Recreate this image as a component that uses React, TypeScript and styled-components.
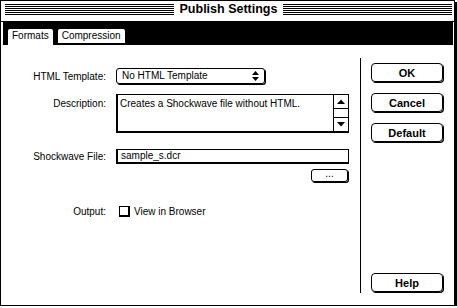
import React from "react";
import styled, { createGlobalStyle } from "styled-components";

const GlobalStyle = createGlobalStyle`
  html, body {
    margin: 0;
    padding: 0;
    background: #fff;
  }
  body {
    font-family: "Liberation Sans", Arial, sans-serif;
    font-size: 10px;
    color: #000;
    -webkit-font-smoothing: none;
  }
`;

const Window = styled.div`
  box-sizing: border-box;
  width: 455px;
  height: 306px;
  border: 1px solid #000;
  box-shadow: 2px 2px 0 #000;
  background: #fff;
  display: flex;
  flex-direction: column;
`;

const TitleBar = styled.div`
  box-sizing: border-box;
  height: 21px;
  border-bottom: 1px solid #000;
  display: flex;
  align-items: flex-start;
  padding: 3px 2px 0 4px;
`;

const Stripes = styled.div`
  flex: 1;
  height: 11px;
  background: repeating-linear-gradient(
    to bottom,
    #000 0px,
    #000 1px,
    #fff 1px,
    #fff 2px
  );
`;

const Title = styled.div`
  font-weight: bold;
  font-size: 12.5px;
  line-height: 12px;
  padding: 0 6px;
  margin-top: -1px;
`;

const TabBar = styled.div`
  height: 23px;
  margin: 0 1px 0 2px;
  background: #000;
  display: flex;
  align-items: flex-end;
  gap: 5px;
  padding-left: 5px;
`;

const Tab = styled.div<{ $active?: boolean }>`
  box-sizing: border-box;
  height: ${({ $active }) => ($active ? 16 : 14)}px;
  margin-bottom: ${({ $active }) => ($active ? 0 : 2)}px;
  padding: 0 4px;
  background: #fff;
  border-radius: 2px 2px 0 0;
  line-height: 14px;
  padding-top: 0;
`;

const Body = styled.div`
  flex: 1;
  display: flex;
`;

const Main = styled.div`
  width: 358px;
  padding-left: 1px;
  padding-top: 23px;
  display: flex;
  flex-direction: column;
`;

const Row = styled.div<{ $top?: number; $align?: string }>`
  display: grid;
  grid-template-columns: 104px 233px;
  column-gap: 10px;
  align-items: ${({ $align }) => $align || "center"};
  margin-top: ${({ $top }) => $top || 0}px;
`;

const Label = styled.div<{ $pad?: number }>`
  text-align: right;
  line-height: 13px;
  padding-top: ${({ $pad }) => $pad || 0}px;
`;

const Popup = styled.div`
  box-sizing: border-box;
  width: 149px;
  height: 16px;
  border: 1px solid #000;
  border-radius: 3px;
  box-shadow: 1px 1px 0 #000;
  display: flex;
  align-items: center;
  justify-content: space-between;
  padding: 0 5px 0 5px;
  line-height: 14px;
`;

const TextBox = styled.div`
  box-sizing: border-box;
  width: 233px;
  height: 39px;
  border: 1px solid #000;
  border-left-width: 2px;
  border-bottom-width: 2px;
  display: flex;
`;

const TextContent = styled.div`
  flex: 1;
  padding: 2px 0 0 2px;
  line-height: 13px;
`;

const ScrollBar = styled.div`
  width: 14px;
  border-left: 1px solid #000;
  display: flex;
  flex-direction: column;
`;

const ScrollArrow = styled.div<{ $bottom?: boolean }>`
  height: 13px;
  display: flex;
  align-items: center;
  justify-content: center;
  border-top: ${({ $bottom }) => ($bottom ? "1px solid #000" : "none")};
  border-bottom: ${({ $bottom }) => ($bottom ? "none" : "1px solid #000")};
`;

const ScrollTrack = styled.div`
  flex: 1;
`;

const Field = styled.div`
  box-sizing: border-box;
  width: 233px;
  height: 15px;
  border: 1px solid #000;
  border-left-width: 2px;
  border-bottom-width: 2px;
  padding-left: 3px;
  line-height: 12px;
`;

const SmallButton = styled.div`
  box-sizing: border-box;
  justify-self: end;
  width: 37px;
  height: 13px;
  margin-right: 1px;
  border: 1px solid #000;
  border-radius: 3px;
  box-shadow: 1px 1px 0 #000;
  text-align: center;
  line-height: 8px;
  font-size: 10px;
`;

const CheckRow = styled.div`
  display: flex;
  align-items: center;
  gap: 4px;
  padding-left: 3px;
`;

const CheckBox = styled.div`
  box-sizing: border-box;
  width: 11px;
  height: 11px;
  border: 1px solid #000;
  border-right-width: 2px;
  border-bottom-width: 2px;
`;

const Separator = styled.div`
  width: 1px;
  background: #000;
  margin: 13px 0 12px;
`;

const ButtonColumn = styled.div`
  flex: 1;
  display: flex;
  flex-direction: column;
  padding: 18px 0 13px 10px;
  gap: 11px;
`;

const Button = styled.div<{ $push?: boolean }>`
  box-sizing: border-box;
  width: 72px;
  height: 19px;
  border: 1px solid #000;
  border-radius: 4px;
  box-shadow: 1px 1px 0 #000;
  display: flex;
  align-items: center;
  justify-content: center;
  font-weight: bold;
  font-size: 11px;
  margin-top: ${({ $push }) => ($push ? "auto" : "0")};
`;

const PopupArrows = () => (
  <svg width="7" height="10" viewBox="0 0 7 10">
    <path d="M3.5 0 L7 4 L0 4 Z" fill="#000" />
    <path d="M3.5 10 L7 6 L0 6 Z" fill="#000" />
  </svg>
);

const Arrow = ({ down }: { down?: boolean }) => (
  <svg width="8" height="5" viewBox="0 0 8 5">
    {down ? (
      <path d="M0 0 L8 0 L4 4.5 Z" fill="#000" />
    ) : (
      <path d="M4 0.5 L8 5 L0 5 Z" fill="#000" />
    )}
  </svg>
);

export default function App() {
  return (
    <>
      <GlobalStyle />
      <Window>
        <TitleBar>
          <Stripes />
          <Title>Publish Settings</Title>
          <Stripes />
        </TitleBar>
        <TabBar>
          <Tab $active>Formats</Tab>
          <Tab>Compression</Tab>
        </TabBar>
        <Body>
          <Main>
            <Row>
              <Label>HTML Template:</Label>
              <Popup>
                <span>No HTML Template</span>
                <PopupArrows />
              </Popup>
            </Row>
            <Row $top={10} $align="start">
              <Label $pad={3}>Description:</Label>
              <TextBox>
                <TextContent>Creates a Shockwave file without HTML.</TextContent>
                <ScrollBar>
                  <ScrollArrow>
                    <Arrow />
                  </ScrollArrow>
                  <ScrollTrack />
                  <ScrollArrow $bottom>
                    <Arrow down />
                  </ScrollArrow>
                </ScrollBar>
              </TextBox>
            </Row>
            <Row $top={16}>
              <Label>Shockwave File:</Label>
              <Field>sample_s.dcr</Field>
            </Row>
            <Row $top={5}>
              <span />
              <SmallButton>...</SmallButton>
            </Row>
            <Row $top={23}>
              <Label>Output:</Label>
              <CheckRow>
                <CheckBox />
                <span>View in Browser</span>
              </CheckRow>
            </Row>
          </Main>
          <Separator />
          <ButtonColumn>
            <Button>OK</Button>
            <Button>Cancel</Button>
            <Button>Default</Button>
            <Button $push>Help</Button>
          </ButtonColumn>
        </Body>
      </Window>
    </>
  );
}
